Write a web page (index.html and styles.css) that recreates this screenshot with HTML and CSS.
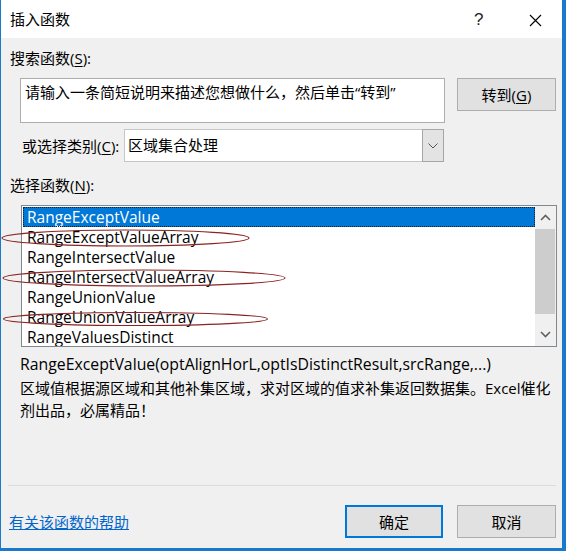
FILE: index.html
```html
<!DOCTYPE html>
<html lang="zh-CN">
<head>
<meta charset="utf-8">
<title>插入函数</title>
<link rel="stylesheet" href="styles.css">
</head>
<body>
<div class="window">
  <div class="titlebar">
    <span class="title">插入函数</span>
    <span class="help">?</span>
    <span class="close">
      <svg width="13" height="13" viewBox="0 0 13 13"><path d="M1 1 L12 12 M12 1 L1 12" stroke="#000" stroke-width="1.1" fill="none"/></svg>
    </span>
  </div>
  <div class="body">
    <div class="label">搜索函数(<u>S</u>):</div>
    <div class="search-row">
      <div class="search-box">请输入一条简短说明来描述您想做什么，然后单击“转到”</div>
      <button class="btn go">转到(<u>G</u>)</button>
    </div>
    <div class="cat-row">
      <span class="cat-label">或选择类别(<u>C</u>):</span>
      <div class="combo">
        <span class="combo-text">区域集合处理</span>
        <span class="combo-btn">
          <svg width="10" height="6" viewBox="0 0 10 6"><path d="M0.5 0.5 L5 5 L9.5 0.5" stroke="#555" stroke-width="1" fill="none"/></svg>
        </span>
      </div>
    </div>
    <div class="label fn-label">选择函数(<u>N</u>):</div>
    <div class="listbox">
      <ul class="items">
        <li class="item selected">RangeExceptValue</li>
        <li class="item">RangeExceptValueArray</li>
        <li class="item">RangeIntersectValue</li>
        <li class="item">RangeIntersectValueArray</li>
        <li class="item">RangeUnionValue</li>
        <li class="item">RangeUnionValueArray</li>
        <li class="item">RangeValuesDistinct</li>
      </ul>
      <div class="scrollbar">
        <div class="arrow up">
          <svg width="11" height="7" viewBox="0 0 11 7"><path d="M1 6 L5.5 1.5 L10 6" stroke="#606060" stroke-width="1.6" fill="none"/></svg>
        </div>
        <div class="thumb"></div>
        <div class="track"></div>
        <div class="arrow down">
          <svg width="11" height="7" viewBox="0 0 11 7"><path d="M1 1 L5.5 5.5 L10 1" stroke="#606060" stroke-width="1.6" fill="none"/></svg>
        </div>
      </div>
    </div>
    <div class="signature">RangeExceptValue(optAlignHorL,optIsDistinctResult,srcRange,...)</div>
    <div class="desc">区域值根据源区域和其他补集区域，求对区域的值求补集返回数据集。Excel催化剂出品，必属精品！</div>
    <div class="separator"></div>
    <div class="footer">
      <a class="help-link" href="#">有关该函数的帮助</a>
      <div class="buttons">
        <button class="btn default">确定</button>
        <button class="btn">取消</button>
      </div>
    </div>
  </div>
  <svg class="annotations" width="566" height="551" viewBox="0 0 566 551">
    <ellipse cx="125.5" cy="238" rx="123.5" ry="8" fill="none" stroke="#8b2323" stroke-width="1.1"/>
    <ellipse cx="144" cy="278" rx="141" ry="8" fill="none" stroke="#8b2323" stroke-width="1.1"/>
    <ellipse cx="135.5" cy="319" rx="132" ry="6.5" fill="none" stroke="#8b2323" stroke-width="1.1"/>
  </svg>
</div>
</body>
</html>
```

FILE: styles.css
```css
* { box-sizing: border-box; }
html, body { margin: 0; padding: 0; background: #f0f0f0; }
body {
  font-family: "Open Sans", "Noto Sans CJK SC", sans-serif;
  font-size: 15px;
  color: #000;
}
u { text-decoration: underline; text-underline-offset: 2px; }
.window {
  position: relative;
  width: 566px;
  height: 551px;
  background: #f0f0f0;
  border-left: 1px solid #1979ca;
  border-right: 4px solid #1979ca;
  border-bottom: 3px solid #1979ca;
  display: flex;
  flex-direction: column;
}
.titlebar {
  height: 38px;
  background: #fff;
  display: flex;
  align-items: center;
  padding-left: 9px;
  flex: none;
}
.title { line-height: 20px; }
.help {
  margin-left: auto;
  font-family: "Liberation Sans", sans-serif;
  font-size: 17px;
  color: #222;
  width: 10px;
  line-height: 20px;
  margin-top: 2px;
}
.close {
  display: flex;
  margin-left: 45px;
  margin-right: 20px;
  margin-top: 2px;
}
.body {
  flex: 1;
  display: flex;
  flex-direction: column;
  padding: 0 6px 10px 7px;
}
.label {
  line-height: 20px;
  height: 20px;
  padding-left: 2px;
  margin-top: 10px;
}
.search-row {
  display: flex;
  align-items: flex-start;
  gap: 12px;
  margin-top: 10px;
  padding-left: 12px;
}
.search-box {
  width: 425px;
  height: 45px;
  background: #fff;
  border: 1px solid #adadad;
  padding: 3px 4px;
  line-height: 20px;
  white-space: nowrap;
  overflow: hidden;
}
.btn {
  font: inherit;
  color: #000;
  background: #e1e1e1;
  border: 1px solid #adadad;
  width: 99px;
  height: 33px;
  padding: 0;
  line-height: 20px;
}
.btn.default { border: 2px solid #0078d7; width: 98px; }
.cat-row {
  display: flex;
  align-items: center;
  margin-top: 6px;
  padding-left: 14px;
  height: 33px;
}
.cat-label { width: 102px; line-height: 20px; }
.combo {
  width: 320px;
  height: 33px;
  display: flex;
  background: #fff;
  border: 1px solid #c6c6c6;
}
.combo-text { flex: 1; padding-left: 3px; line-height: 30px; }
.combo-btn {
  width: 22px;
  margin: -1px -1px -1px 0;
  background: #e3e3e3;
  border: 1px solid #a6a6a6;
  display: flex;
  align-items: center;
  justify-content: center;
}
.fn-label { margin-top: 13px; }
.listbox {
  margin-top: 10px;
  margin-left: 13px;
  width: 536px;
  height: 142px;
  border: 1px solid #828790;
  background: #fff;
  display: flex;
  overflow: hidden;
}
.items {
  list-style: none;
  margin: 0;
  padding: 1px 0 0 1px;
  flex: 1;
  font-size: 15.5px;
}
.item {
  height: 20px;
  line-height: 20px;
  padding-left: 4px;
  white-space: nowrap;
}
.item.selected {
  background: #0078d7;
  color: #fff;
  outline: 1px dotted #1e1e1e;
  outline-offset: -1px;
}
.scrollbar {
  width: 21px;
  background: #f0f0f0;
  display: flex;
  flex-direction: column;
}
.arrow {
  height: 23px;
  display: flex;
  align-items: center;
  justify-content: center;
}
.thumb {
  height: 85px;
  margin: 0 1px 0 0;
  background: #cdcdcd;
}
.track { flex: 1; }
.signature {
  margin-top: 6px;
  padding-left: 12px;
  line-height: 22px;
  white-space: nowrap;
  font-size: 15.8px;
}
.desc {
  margin-top: 2px;
  padding-left: 12px;
  line-height: 22px;
  width: 548px;
}
.separator {
  margin-top: auto;
  height: 1px;
  background: #dcdcdc;
  flex: none;
}
.footer {
  margin-top: 19px;
  display: flex;
  align-items: center;
}
.help-link {
  margin-left: 1px;
  color: #0066cc;
  text-decoration: underline;
  line-height: 20px;
}
.buttons {
  margin-left: auto;
  display: flex;
  gap: 14px;
}
.annotations {
  position: absolute;
  left: -1px;
  top: 0;
  pointer-events: none;
}
```
